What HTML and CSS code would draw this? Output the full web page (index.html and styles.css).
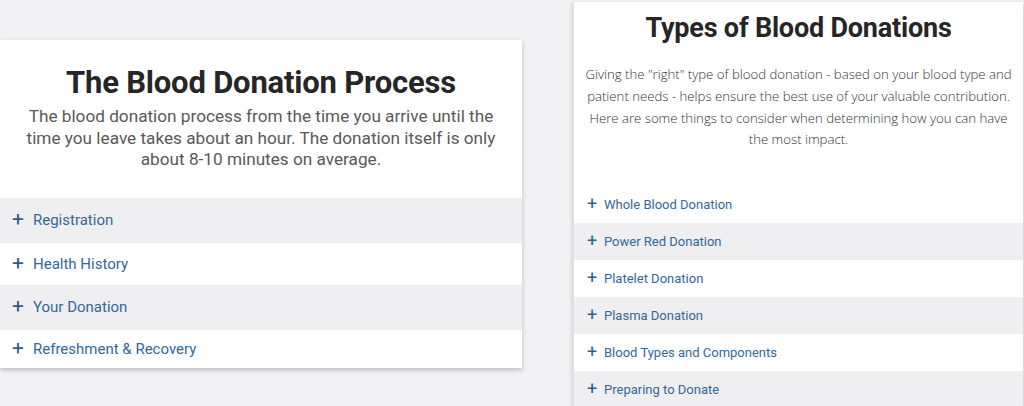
FILE: index.html
```html
<!DOCTYPE html>
<html lang="en">
<head>
  <meta charset="UTF-8" />
  <meta name="viewport" content="width=device-width, initial-scale=1.0"/>
  <title>Blood Donation</title>
  <link rel="stylesheet" href="styles.css">
</head>
<body>

  <div class="page">
    <section class="card process">
      <div class="card-head">
        <h1>The Blood Donation Process</h1>
        <p>The blood donation process from the time you arrive until the time you leave takes about an hour. The donation itself is only about 8-10 minutes on average.</p>
      </div>
      <ul class="accordion">
        <li class="shade"><span class="plus">+</span>Registration</li>
        <li><span class="plus">+</span>Health History</li>
        <li class="shade"><span class="plus">+</span>Your Donation</li>
        <li><span class="plus">+</span>Refreshment &amp; Recovery</li>
      </ul>
    </section>

    <section class="card types">
      <div class="card-head">
        <h1>Types of Blood Donations</h1>
        <p>Giving the "right" type of blood donation - based on your blood type and patient needs - helps ensure the best use of your valuable contribution. Here are some things to consider when determining how you can have the most impact.</p>
      </div>
      <ul class="accordion">
        <li><span class="plus">+</span>Whole Blood Donation</li>
        <li class="shade"><span class="plus">+</span>Power Red Donation</li>
        <li><span class="plus">+</span>Platelet Donation</li>
        <li class="shade"><span class="plus">+</span>Plasma Donation</li>
        <li><span class="plus">+</span>Blood Types and Components</li>
        <li class="shade"><span class="plus">+</span>Preparing to Donate</li>
      </ul>
    </section>
  </div>

</body>
</html>
```

FILE: styles.css
```css
* {
  box-sizing: border-box;
}

body {
  margin: 0;
  background: #f2f2f4;
  font-family: Roboto, "Liberation Sans", sans-serif;
  color: #333;
  height: 406px;
  overflow: hidden;
}

.page {
  display: flex;
  align-items: flex-start;
  gap: 51px;
}

.card {
  background: #fff;
  box-shadow: 0 2px 5px rgba(0, 0, 0, 0.22);
}

.card-head {
  text-align: center;
}

.card h1 {
  margin: 0;
  font-weight: 700;
  color: #262626;
  letter-spacing: -0.2px;
}

.card p {
  margin: 0;
  color: #595959;
}

.accordion {
  list-style: none;
  margin: 0;
  padding: 0;
}

.accordion li {
  display: flex;
  align-items: center;
  color: #33689a;
  background: #fff;
}

.accordion li.shade {
  background: #efeff1;
}

.plus {
  font-weight: 400;
  color: #2b5f8e;
}

/* left card */
.process {
  width: 522px;
  margin-top: 40px;
}

.process .card-head {
  padding: 25px 20px 27px;
}

.process h1 {
  font-size: 31px;
  line-height: 36px;
  margin-bottom: 5px;
}

.process p {
  font-size: 17.2px;
  line-height: 21.5px;
}

.process .accordion li {
  height: 45px;
  padding-left: 12px;
  font-size: 15px;
}

.process .accordion li:nth-child(2) {
  height: 42px;
}

.process .accordion li:last-child {
  height: 38px;
}

.process .plus {
  font-size: 21px;
  width: 21px;
  margin-top: -2px;
}

/* right card */
.types {
  width: 450px;
  margin-top: 2px;
  border-left: 1px solid #e2e2e4;
}

.types .card-head {
  padding: 9px 8px 35px;
}

.types h1 {
  font-size: 27px;
  line-height: 34px;
  margin-bottom: 19px;
}

.types p {
  font-family: "Open Sans", "Liberation Sans", sans-serif;
  font-weight: 300;
  font-size: 13.2px;
  line-height: 21.8px;
  color: #333;
}

.types .accordion li {
  height: 37px;
  padding-left: 13px;
  font-size: 13px;
}

.types .plus {
  font-size: 18px;
  width: 17px;
  margin-top: -2px;
}
```
